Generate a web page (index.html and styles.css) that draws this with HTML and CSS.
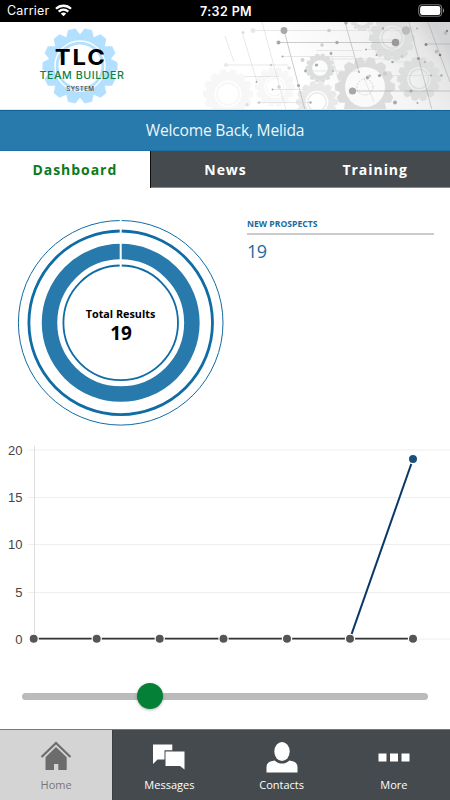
FILE: index.html
```html
<!DOCTYPE html>
<html lang="en">

<head>
    <meta charset="UTF-8">
    <meta name="viewport" content="width=device-width, initial-scale=1.0">

    <title>TLC Team Builder System</title>
    <link rel="stylesheet" href="styles.css">
</head>

<body>

    <div class="status-bar">
        <div class="carrier">
            <span>Carrier</span>
            <svg width="17" height="13" viewBox="0 0 17 13">
                <g fill="none" stroke="#fff" stroke-width="2.3">
                    <path d="M1 4.8C5.2.7 11.8.7 16 4.8"></path>
                    <path d="M3.7 7.7C6.5 5.1 10.5 5.1 13.3 7.7"></path>
                </g>
                <path d="M8.5 12.2L5.8 9.5C7.3 8.2 9.7 8.2 11.2 9.5Z" fill="#fff"></path>
            </svg>
        </div>
        <div class="time">7:32 PM</div>
        <div class="battery">
            <svg width="27" height="13" viewBox="0 0 27 13">
                <rect x="0.7" y="0.7" width="23" height="11.6" rx="3.5" fill="none" stroke="#777" stroke-width="1.1"></rect>
                <rect x="2.1" y="2.1" width="20.2" height="8.8" rx="2.2" fill="#fff"></rect>
                <path d="M25 4.4C26.5 4.9 26.5 8.1 25 8.6Z" fill="#888"></path>
            </svg>
        </div>
    </div>

    <div class="header">
        <svg width="450" height="88" viewBox="0 0 450 88">
            <defs>
                <linearGradient id="fade" x1="0.3" y1="0.5" x2="1" y2="0.3">
                    <stop offset="0" stop-color="#fff"></stop>
                    <stop offset="0.55" stop-color="#f4f4f4"></stop>
                    <stop offset="0.85" stop-color="#e6e6e6"></stop>
                    <stop offset="1" stop-color="#d2d3d4"></stop>
                </linearGradient>
                <path id="teeth" d="M-10 -100H10L20 -80H-20ZM-10 100H10L20 80H-20Z"></path>
                <g id="all-teeth">
                    <use href="#teeth" transform="rotate(12.86)"></use>
                    <use href="#teeth" transform="rotate(38.57)"></use>
                    <use href="#teeth" transform="rotate(64.29)"></use>
                    <use href="#teeth" transform="rotate(90)"></use>
                    <use href="#teeth" transform="rotate(115.71)"></use>
                    <use href="#teeth" transform="rotate(141.43)"></use>
                    <use href="#teeth" transform="rotate(167.14)"></use>
                </g>
                <g id="gear">
                    <use href="#all-teeth"></use>
                    <circle r="68" fill="none" stroke="currentColor" stroke-width="28"></circle>
                </g>
                <g id="gear-rings">
                    <use href="#gear"></use>
                    <circle r="44" fill="none" stroke="currentColor" stroke-width="7"></circle>
                </g>
            </defs>

            <!-- background -->
            <rect x="225" width="225" height="88" fill="url(#fade)"></rect>
            <g fill="currentColor">
                <use class="gear-dark" href="#gear" transform="translate(365 65) scale(.3)"></use>
                <use class="gear-mid" href="#gear" transform="translate(320 46) scale(.145)"></use>
                <use class="gear-mid" href="#gear-rings" transform="translate(392 16) scale(.23)"></use>
                <use class="gear-mid" href="#gear-rings" transform="translate(419 57) scale(.22)"></use>
                <use class="gear-mid" href="#gear" transform="translate(362 -3) scale(.12)"></use>
                <use class="gear-light" href="#gear-rings" transform="translate(317 80) scale(.21)"></use>
                <use class="gear-faint" href="#gear-rings" transform="translate(275 65) scale(.2)"></use>
                <use class="gear-faint" href="#gear-rings" transform="translate(228 72) scale(.25)"></use>
            </g>
            <circle cx="365" cy="65" r="20" fill="#fafafa"></circle>
            <circle cx="365" cy="65" r="8" fill="none" stroke="#ccc" stroke-width="0.7" stroke-dasharray="2 1"></circle>
            <g class="net">
                <path d="M284 8L305 88M345 0L359 50M409 0L432 88M428 0L450 60" stroke="#aaa"></path>
                <path d="M262 0L286 88M242 10L257 60M225 14L234 40M369 8L377 33M331 31L343 74M364 56L374 80" stroke="#d8d8d8"></path>
                <path d="M278 20.5H395M352 69H450M425 22H450" stroke="#aaa"></path>
                <path d="M254 8.5H417M282 34.500H355M305 49H359M365 27.500H398M392 40H425M379 53.500H442M367 18H400M245 54.500H279M272 67.500H305M258 80.500H310M225 43H288M316 28.500H362M322 37H400" stroke="#d8d8d8"></path>
            </g>
            <g fill="#a8a8a8">
                <circle cx="284" cy="8.500" r="3.400"></circle>
                <circle cx="395.500" cy="20.500" r="3.800" fill="#999"></circle>
                <circle cx="352.500" cy="69" r="3.600"></circle>
                <circle cx="406" cy="8.500" r="4.200" fill="#bbb"></circle>
                <circle cx="278.500" cy="20.500" r="2"></circle>
                <circle cx="337" cy="20.500" r="1.700"></circle>
                <circle cx="329" cy="8.500" r="1.800" fill="#ccc"></circle>
                <circle cx="253" cy="8.500" r="2.500" fill="#e8e8e8"></circle>
                <circle cx="243" cy="10.500" r="1.500" fill="#ddd"></circle>
                <circle cx="322" cy="23" r="1.700" fill="#ccc"></circle>
                <circle cx="346" cy="1" r="1.600"></circle>
                <circle cx="331" cy="31.500" r="1.400"></circle>
                <circle cx="316.500" cy="43" r="1.600"></circle>
                <circle cx="302.500" cy="38" r="2" fill="#d2d2d2"></circle>
                <circle cx="289" cy="46" r="1.800" fill="#ddd"></circle>
                <circle cx="271" cy="43" r="1.300" fill="#ccc"></circle>
                <circle cx="305.500" cy="49" r="1.400"></circle>
                <circle cx="298.500" cy="63.500" r="1.600"></circle>
                <circle cx="279" cy="65" r="1.700" fill="#d2d2d2"></circle>
                <circle cx="259" cy="80.500" r="1.600" fill="#d2d2d2"></circle>
                <circle cx="310.500" cy="80.500" r="1.200"></circle>
                <circle cx="247" cy="82.500" r="1.500" fill="#ddd"></circle>
                <circle cx="226" cy="43" r="2" fill="#e8e8e8"></circle>
                <circle cx="367.500" cy="55.500" r="1.700"></circle>
                <circle cx="369.500" cy="54" r="1.600" fill="#ccc"></circle>
                <circle cx="379.500" cy="53.500" r="1.600"></circle>
                <circle cx="385" cy="51.500" r="2" fill="#ccc"></circle>
                <circle cx="359" cy="50" r="1"></circle>
                <circle cx="392.500" cy="40" r="1.300"></circle>
                <circle cx="402" cy="34.500" r="1.700" fill="#ccc"></circle>
                <circle cx="418.500" cy="36.500" r="1.600" fill="#999"></circle>
                <circle cx="426" cy="22.500" r="1.500" fill="#888"></circle>
                <circle cx="436.500" cy="29.500" r="1.900" fill="#bbb"></circle>
                <circle cx="440" cy="33" r="1.300" fill="#777"></circle>
                <circle cx="445.500" cy="11" r="1.900" fill="#bbb"></circle>
                <circle cx="447" cy="9" r="1.200" fill="#888"></circle>
                <circle cx="431" cy="53.500" r="1"></circle>
                <circle cx="441.500" cy="53.500" r="1.200"></circle>
                <circle cx="411" cy="69" r="1.600"></circle>
                <circle cx="395" cy="80.500" r="1.900"></circle>
                <circle cx="417.500" cy="81" r="1"></circle>
                <circle cx="383" cy="6.500" r="1.200"></circle>
                <circle cx="366" cy="27.500" r="1"></circle>
                <circle cx="376.500" cy="33" r="1"></circle>
                <circle cx="417" cy="6.500" r="0.900"></circle>
                <circle cx="425" cy="40" r="0.900"></circle>
                <circle cx="282.500" cy="34.500" r="1"></circle>
                <circle cx="272.500" cy="67.500" r="0.900"></circle>
                <circle cx="256.500" cy="60" r="0.900"></circle>
                <circle cx="333" cy="49" r="0.900"></circle>
            </g>
            <path d="M0 87.500H450" stroke="#e8e8e8"></path>

            <!-- logo -->
            <g fill="#b3e0ff" transform="translate(80 44)">
                <use href="#all-teeth" transform="scale(.375)"></use>
                <circle r="31.500"></circle>
                <circle r="25" fill="none" stroke="#fff" stroke-width="1.400"></circle>
                <circle r="21.500" fill="#fff"></circle>
            </g>
            <text class="logo-name" x="54.700" y="43" textLength="52" lengthAdjust="spacingAndGlyphs">TLC</text>
            <text class="logo-team" x="39.500" y="57" textLength="85" lengthAdjust="spacingAndGlyphs">TEAM BUILDER</text>
            <text class="logo-system" x="66.300" y="69" textLength="28" lengthAdjust="spacingAndGlyphs">SYSTEM</text>
        </svg>
    </div>

    <div class="welcome">Welcome Back, Melida</div>

    <div class="tabs">
        <div class="tab active">Dashboard</div>
        <div class="tab">News</div>
        <div class="tab">Training</div>
    </div>

    <div class="results">
        <div class="donut">
            <svg width="208" height="208" viewBox="0 0 208 208">
                <g fill="none" stroke="#0f6ca5">
                    <circle cx="103.700" cy="103.800" r="102.300" stroke-width="1"></circle>
                    <circle cx="103.700" cy="103.800" r="91.800" stroke-width="2.800"></circle>
                    <circle cx="103.700" cy="103.800" r="71.200" stroke="#277aab" stroke-width="15.500"></circle>
                    <circle cx="103.700" cy="103.800" r="57.300" stroke-width="1.800"></circle>
                </g>
                <path d="M103.700 0V50" stroke="#fff" stroke-width="2"></path>
                <text class="total-label" x="103.500" y="98.500">Total Results</text>
                <text class="total-num" x="104" y="121">19</text>
            </svg>
        </div>
        <div class="prospects">
            <div class="prospects-title">NEW PROSPECTS</div>
            <div class="prospects-num">19</div>
        </div>
    </div>

    <div class="chart">
        <svg width="450" height="220" viewBox="0 0 450 220">
            <g stroke="#eee">
                <path d="M28 15H450M28 62.500H450M28 109.500H450M28 157.500H450M28 204H450"></path>
                <path d="M34.500 11V204" stroke="#ddd"></path>
            </g>
            <g class="axis">
                <text x="22.500" y="19.500">20</text>
                <text x="22.500" y="67">15</text>
                <text x="22.500" y="114">10</text>
                <text x="22.500" y="161.500">5</text>
                <text x="22.500" y="208.500">0</text>
            </g>
            <path d="M34 203.600H413" stroke="#333" stroke-width="1.800"></path>
            <path d="M350 203.600L413 24" stroke="#0a3866" stroke-width="2"></path>
            <g class="points">
                <circle cx="33.700" cy="203.700" r="4.600"></circle>
                <circle cx="96.700" cy="203.700" r="4.600"></circle>
                <circle cx="159.700" cy="203.700" r="4.600"></circle>
                <circle cx="223.500" cy="203.700" r="4.600"></circle>
                <circle cx="287" cy="203.700" r="4.600"></circle>
                <circle cx="350" cy="203.700" r="4.600"></circle>
                <circle cx="413" cy="203.700" r="4.600"></circle>
                <circle cx="413" cy="24" r="4.600" fill="#18507c"></circle>
            </g>
        </svg>
    </div>

    <div class="slider">
        <input type="range" min="0" max="1000" value="303">
    </div>

    <div class="nav">
        <div class="nav-item active">
            <svg width="32" height="34" viewBox="0 0 32 34">
                <path d="M1.500 17L16 3L30.500 17" fill="none" stroke="#6c6c6c" stroke-width="2.200"></path>
                <path d="M16 7L26.700 17.300V30H18.300V24H14V30H5.500V17.300Z" fill="#6c6c6c"></path>
            </svg>
            <span>Home</span>
        </div>
        <div class="nav-item">
            <svg width="34" height="34" viewBox="0 0 34 34">
                <path d="M1 4.500H20.300V10.300H12.500V19.500H5.500L1 24Z" fill="#fff"></path>
                <path d="M13.500 11.500H32.500V29.500L28 26H13.500Z" fill="#fff"></path>
            </svg>
            <span>Messages</span>
        </div>
        <div class="nav-item">
            <svg width="32" height="34" viewBox="0 0 32 34">
                <ellipse cx="16" cy="11.500" rx="7.700" ry="9.500" fill="#fff"></ellipse>
                <path d="M.5 32.500V27C.5 22.500 4.500 21 8.700 20.500C12 24.500 20 24.500 23.300 20.500C27.500 21 31.500 22.500 31.500 27V32.500Z" fill="#fff"></path>
            </svg>
            <span>Contacts</span>
        </div>
        <div class="nav-item">
            <svg width="32" height="34" viewBox="0 0 32 34">
                <path d="M.5 13.500H8.500V21.500H.5ZM12 13.500H20V21.500H12ZM23.500 13.500H31.500V21.500H23.500Z" fill="#fff"></path>
            </svg>
            <span>More</span>
        </div>
    </div>

</body>

</html>
```

FILE: styles.css
```css
* {
    box-sizing: border-box;
}

body {
    margin: 0;
    width: 450px;
    height: 800px;
    display: flex;
    flex-direction: column;
    overflow: hidden;
    background-color: #fff;
    font-family: "Open Sans", "Noto Sans", sans-serif;
}

svg {
    display: block;
}

.status-bar {
    display: grid;
    grid-template-columns: 1fr auto 1fr;
    align-items: center;
    height: 22px;
    padding: 0 5px 0 7px;
    background-color: #000;
    color: #fff;
    font-family: Inter, sans-serif;
    font-size: 12.5px;
}

.carrier {
    display: flex;
    align-items: center;
    gap: 6px;
}

.carrier span {
    letter-spacing: .2px;
}

.time {
    padding-top: 1px;
    font-weight: 600;
    letter-spacing: .4px;
}

.battery {
    display: flex;
    justify-content: flex-end;
}

.header {
    height: 88px;
}

.gear-dark {
    color: #dcdcdc;
}

.gear-mid {
    color: #dcdddd;
}

.gear-light {
    color: #e9e9e9;
}

.gear-faint {
    color: #f7f7f7;
}

.net {
    fill: none;
    stroke-width: 0.6;
}

.logo-name {
    font-family: Inter, sans-serif;
    font-size: 22px;
    font-weight: 700;
    letter-spacing: 1.8px;
}

.logo-team {
    font-family: Inter, sans-serif;
    font-size: 9.8px;
    font-weight: 500;
    letter-spacing: .5px;
    fill: #0e8140;
}

.logo-system {
    font-family: Inter, sans-serif;
    font-size: 5.6px;
    font-weight: 500;
    letter-spacing: .3px;
    fill: #444;
}

.welcome {
    height: 41px;
    line-height: 39px;
    border-top: 1px solid #0f659b;
    border-bottom: 1px solid #1a6fa4;
    background-color: #277aab;
    color: #eef6fb;
    font-size: 15.6px;
    letter-spacing: -.2px;
    text-align: center;
}

.tabs {
    display: flex;
    height: 37px;
    background-color: #444a4e;
    border-bottom: 1px solid #888;
}

.tab {
    flex: 1;
    line-height: 37px;
    color: #fff;
    font-size: 14px;
    font-weight: 700;
    letter-spacing: .95px;
    text-align: center;
}

.tab.active {
    height: 37px;
    background-color: #fff;
    border-right: 1px solid #111;
    color: #0b7a1b;
}

.results {
    display: flex;
    height: 248px;
    padding: 31px 16px 0 17px;
}

.donut {
    width: 230px;
}

.total-label {
    font-size: 10.8px;
    font-weight: 700;
    text-anchor: middle;
}

.total-num {
    font-size: 19px;
    font-weight: 700;
    text-anchor: middle;
}

.prospects {
    flex: 1;
}

.prospects-title {
    height: 16px;
    line-height: 10px;
    border-bottom: 2px solid #ccc;
    color: #1a6ba2;
    font-size: 8.6px;
    font-weight: 700;
}

.prospects-num {
    line-height: 32px;
    color: #1a6ba2;
    font-size: 18px;
    letter-spacing: -.5px;
}

.chart {
    height: 220px;
}

.axis text {
    font-family: "Liberation Sans", Arial, sans-serif;
    font-size: 13px;
    fill: #444;
    text-anchor: end;
}

.points circle {
    stroke: #fff;
    stroke-width: 1.2;
}

.points {
    fill: #555;
}

.slider {
    height: 74px;
    padding: 28px 22px 0;
}

.slider input {
    display: block;
    width: 406px;
    height: 26px;
    margin: 0;
    background: none;
    appearance: none;
    -webkit-appearance: none;
}

.slider input::-webkit-slider-runnable-track {
    height: 7px;
    border-radius: 4px;
    background-color: #bbb;
}

.slider input::-webkit-slider-thumb {
    -webkit-appearance: none;
    width: 26px;
    height: 26px;
    margin-top: -10px;
    border-radius: 50%;
    background-color: #048136;
    box-shadow: 0 1px 3px rgba(0, 0, 0, .3);
}

.nav {
    display: flex;
    height: 71px;
    border-top: 1px solid #777;
    background-color: #444a4e;
}

.nav-item {
    flex: 1;
    display: flex;
    flex-direction: column;
    align-items: center;
    padding-top: 10px;
    color: #fff;
    font-size: 11px;
}

.nav-item span {
    line-height: 15px;
    margin-top: 3px;
}

.nav-item.active {
    background-color: #d4d4d4;
    border-right: 1px solid #3a3f43;
    color: #777;
}
```
